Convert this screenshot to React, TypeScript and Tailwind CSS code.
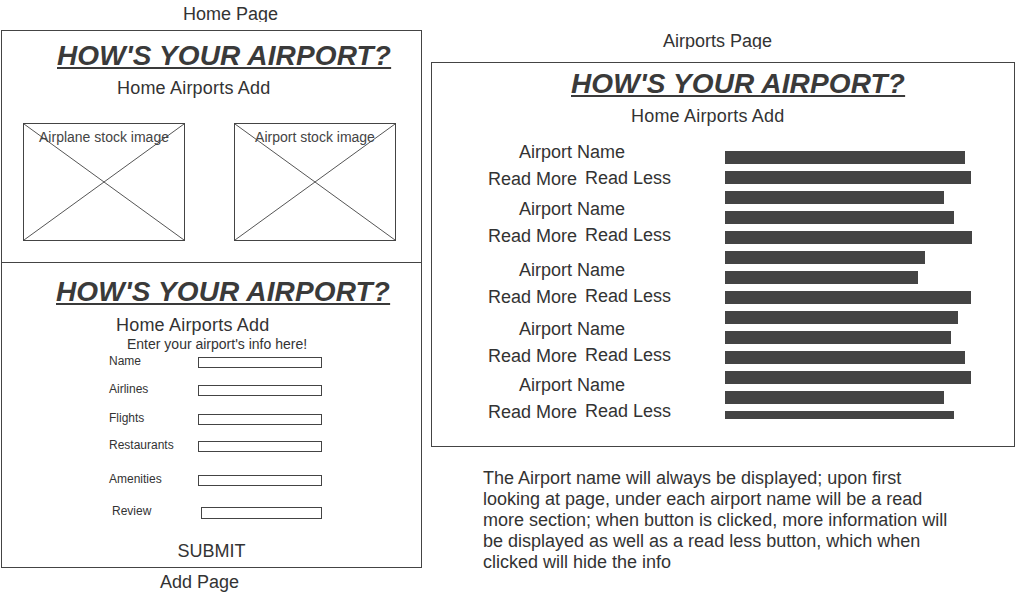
const bars = [240, 246, 219, 229, 247, 200, 193, 246, 233, 226, 240, 246, 219, 229];

const groups = [
  { mt: "mt-[15px]" },
  { mt: "mt-[9px]" },
  { mt: "mt-[13px]" },
  { mt: "mt-[11px]" },
  { mt: "mt-[8px]" },
];

const fields = [
  { label: "Name", mt: "mt-[2px]", pl: "pl-[107px]", input: "w-[124px] h-[11px]" },
  { label: "Airlines", mt: "mt-[14px]", pl: "pl-[107px]", input: "w-[124px] h-[11px]" },
  { label: "Flights", mt: "mt-[15px]", pl: "pl-[107px]", input: "w-[124px] h-[11px]" },
  { label: "Restaurants", mt: "mt-[13px]", pl: "pl-[107px]", input: "w-[124px] h-[11px]" },
  { label: "Amenities", mt: "mt-[20px]", pl: "pl-[107px]", input: "w-[124px] h-[11px]" },
  { label: "Review", mt: "mt-[18px]", pl: "pl-[110px]", input: "w-[121px] h-[12px]" },
];

function Title({ className }: { className: string }) {
  return (
    <div className={`text-[28px] leading-[32px] font-bold italic underline decoration-[1.5px] underline-offset-[2px] tracking-[0.15px] text-[#3a3a3a] ${className}`}>
      HOW'S YOUR AIRPORT?
    </div>
  );
}

function Nav({ className }: { className: string }) {
  return <div className={`text-[18px] leading-[21px] tracking-[0.2px] ${className}`}>Home Airports Add</div>;
}

function Placeholder({ text }: { text: string }) {
  return (
    <div className="relative w-[162px] h-[118px] border border-[#444]">
      <svg className="absolute inset-0 w-full h-full" viewBox="0 0 160 116" preserveAspectRatio="none">
        <line x1="0" y1="0" x2="160" y2="116" stroke="#555" strokeWidth="1" vectorEffect="non-scaling-stroke" />
        <line x1="160" y1="0" x2="0" y2="116" stroke="#555" strokeWidth="1" vectorEffect="non-scaling-stroke" />
      </svg>
      <div className="relative pt-[5px] text-center text-[14px] leading-[16px] text-[#444]">{text}</div>
    </div>
  );
}

export default function App() {
  return (
    <div className="w-[1024px] h-[600px] bg-white flex overflow-hidden text-[#333] font-['Liberation_Sans',Arial,sans-serif]">
      {/* left column: home + add */}
      <div className="ml-px w-[421px] flex flex-col shrink-0">
        <div className="h-[30px]">
          <div className="mt-[4px] h-[18px] overflow-hidden pl-[182px] text-[18px] leading-[21px]">Home Page</div>
        </div>

        <div className="h-[233px] border border-[#444] flex flex-col">
          <Title className="mt-[9px] pl-[55px]" />
          <Nav className="mt-[6px] pl-[115px]" />
          <div className="mt-[24px] pl-[21px] flex gap-[49px]">
            <Placeholder text="Airplane stock image" />
            <Placeholder text="Airport stock image" />
          </div>
        </div>

        <div className="-mt-px h-[306px] border border-[#444] flex flex-col">
          <Title className="mt-[13px] pl-[54px]" />
          <Nav className="mt-[7px] pl-[114px]" />
          <div className="h-[16px] overflow-hidden pl-[125px] text-[14px] leading-[16px]">Enter your airport's info here!</div>
          {fields.map((f) => (
            <div key={f.label} className={`flex items-start ${f.mt} ${f.pl}`}>
              <span className="w-[89px] shrink-0 text-[12px] leading-[14px]">{f.label}</span>
              <div className={`mt-[3px] border border-[#444] ${f.input}`} />
            </div>
          ))}
          <div className="mt-[22px] text-center text-[18px] leading-[21px]">SUBMIT</div>
        </div>

        <div className="mt-[4px] pl-[159px] text-[18px] leading-[21px]">Add Page</div>
      </div>

      {/* right column: airports */}
      <div className="ml-[9px] w-[584px] flex flex-col shrink-0">
        <div className="mt-[31px] h-[18px] overflow-hidden pl-[232px] text-[18px] leading-[21px]">Airports Page</div>

        <div className="mt-[13px] h-[385px] border border-[#444] flex flex-col">
          <Title className="mt-[5px] pl-[139px]" />
          <Nav className="mt-[6px] pl-[199px]" />
          <div className="flex">
            <div className="w-[293px] shrink-0 flex flex-col text-[18px] leading-[21px]">
              {groups.map((g, i) => (
                <div key={i} className={g.mt}>
                  <div className="pl-[87px]">Airport Name</div>
                  <div className="mt-[6px] pl-[56px] flex items-start">
                    <span>Read More</span>
                    <span className="ml-[8px] -mt-px">Read Less</span>
                  </div>
                </div>
              ))}
            </div>
            <div className="mt-[24px] flex flex-col gap-[7px]">
              {bars.map((w, i) => (
                <div
                  key={i}
                  className={`bg-[#444] ${i === bars.length - 1 ? "h-[8px]" : "h-[13px]"}`}
                  style={{ width: w }}
                />
              ))}
            </div>
          </div>
        </div>

        <p className="mt-[21px] ml-[52px] w-[470px] text-[18px] leading-[21px]">
          The Airport name will always be displayed; upon first looking at page, under each airport name will be a read
          more section; when button is clicked, more information will be displayed as well as a read less button, which
          when clicked will hide the info
        </p>
      </div>
    </div>
  );
}
